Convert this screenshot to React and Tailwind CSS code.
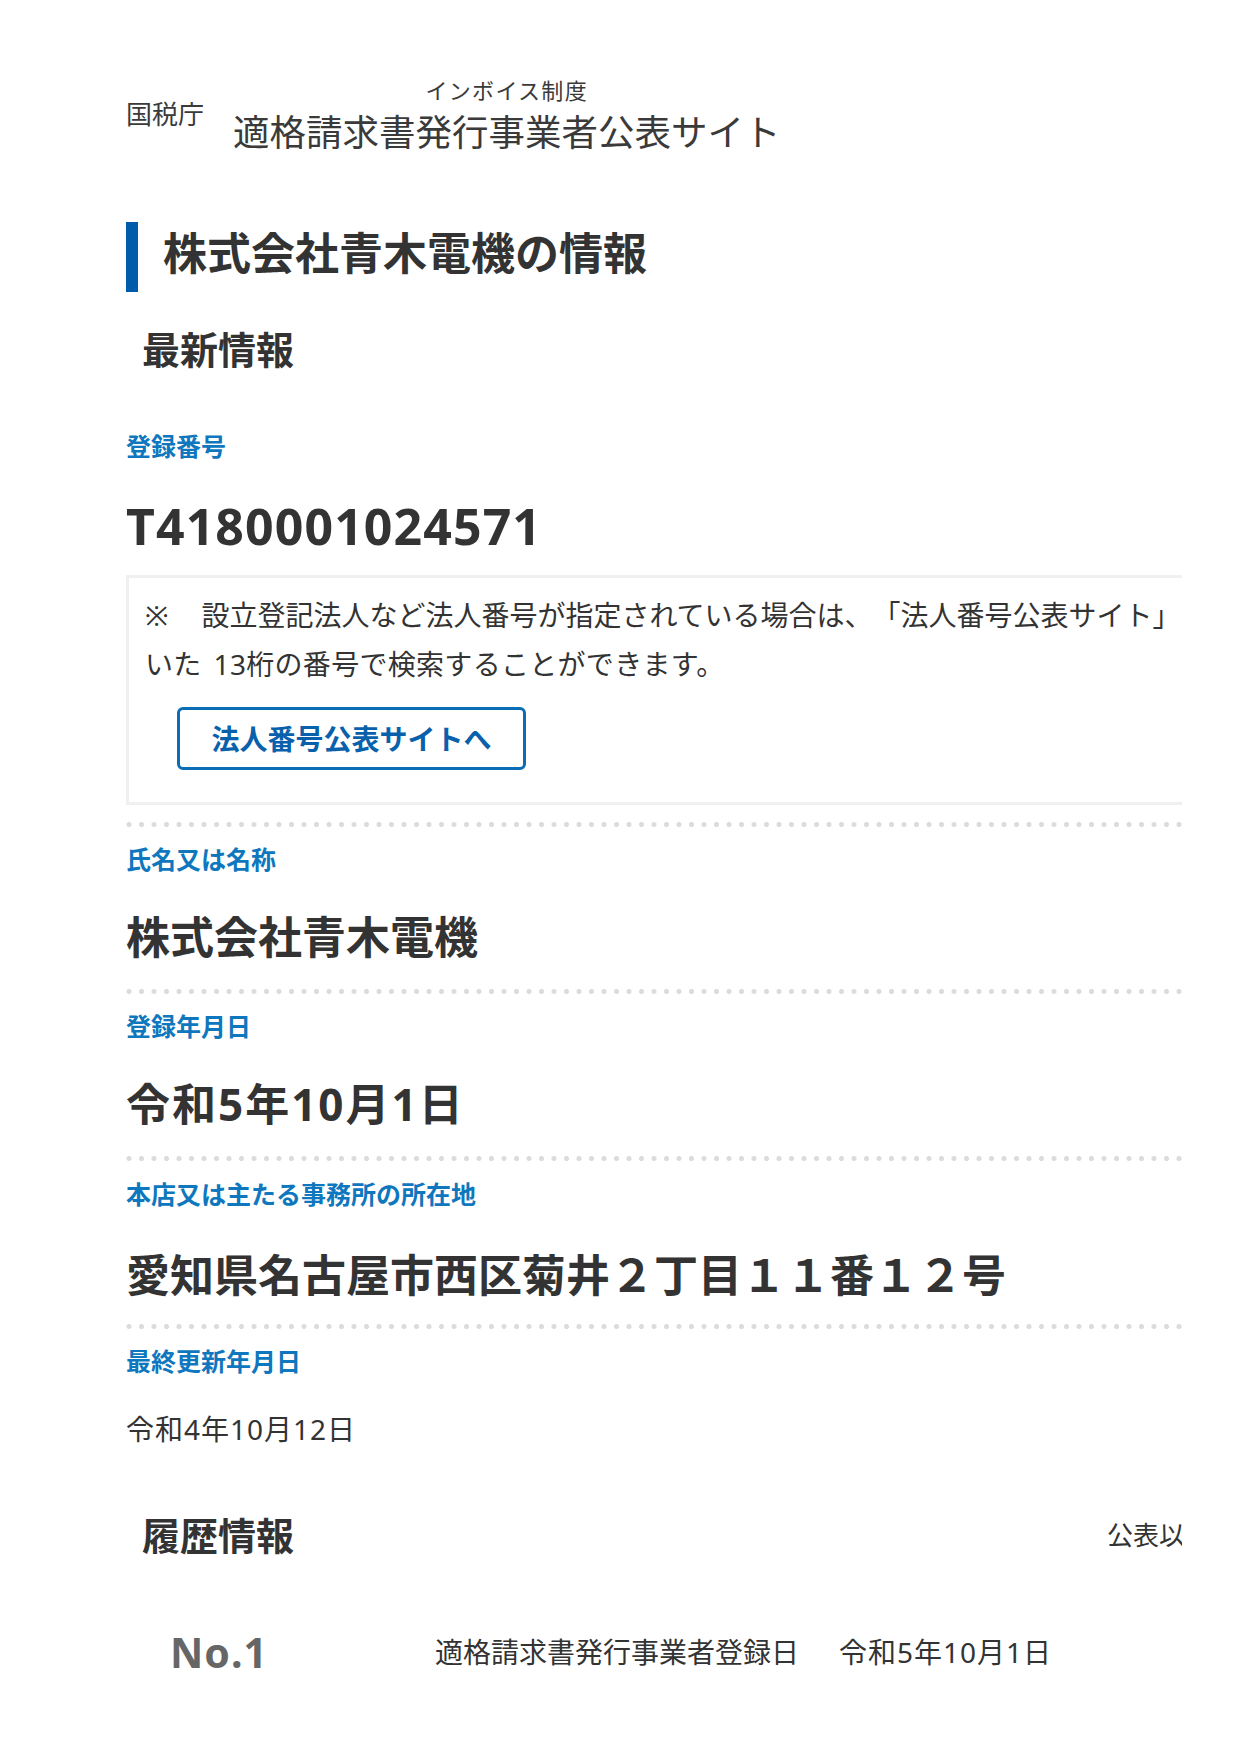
import React from "react";

function Dots({ className = "" }) {
  return (
    <div
      className={
        "h-[5px] w-full bg-[radial-gradient(circle,#dcdcdc_2.2px,transparent_2.8px)] bg-[length:12.5px_5px] bg-repeat-x bg-[position:-3.25px_0] " +
        className
      }
    />
  );
}

function Label({ children, className = "" }) {
  return (
    <div className={"text-[25px] leading-[40px] font-bold text-[#0f77bd] whitespace-nowrap " + className}>
      {children}
    </div>
  );
}

export default function App() {
  return (
    <div className="w-[1242px] min-h-[1754px] bg-white text-[#333] [font-family:'Noto_Sans','Noto_Sans_CJK_JP',sans-serif]">
      <div className="ml-[126px] w-[1056px] overflow-hidden pt-[76px] pb-[70px]">
        {/* header logo */}
        <div className="flex">
          <div className="w-[107px] mt-[22px] text-[26px] leading-[32px] text-[#3a3a3a] whitespace-nowrap">国税庁</div>
          <div className="flex flex-col items-center text-[#3a3a3a]">
            <div className="text-[22px] leading-[28px] tracking-[1.3px] whitespace-nowrap">インボイス制度</div>
            <div className="mt-[6px] text-[36.5px] leading-[44px] whitespace-nowrap">適格請求書発行事業者公表サイト</div>
          </div>
        </div>

        {/* page heading */}
        <div className="mt-[68px] flex items-start">
          <div className="w-[12px] h-[70px] bg-[#005bac] shrink-0" />
          <h1 className="ml-[25px] text-[44px] leading-[62px] font-bold text-[#333] whitespace-nowrap">株式会社青木電機の情報</h1>
        </div>

        <h2 className="mt-[32px] pl-[16px] text-[38px] leading-[50px] font-bold whitespace-nowrap">最新情報</h2>

        <Label className="mt-[52px]">登録番号</Label>
        <div className="mt-[30px] text-[50px] leading-[60px] font-bold tracking-[1.1px]">T4180001024571</div>

        <div className="mt-[19px] w-[1300px] border-[3px] border-[#f0f0f0] pl-[16px] pt-[13px] pb-[32px]">
          <div className="text-[28px] leading-[49px] whitespace-nowrap [text-spacing-trim:space-all]">
            <span className="mr-[5px]">※</span>　設立登記法人など法人番号が指定されている場合は、「法人番号公表サイト」で、法人番号から「T」を除
          </div>
          <div className="text-[28px] leading-[49px] whitespace-nowrap tracking-[0.3px] [text-spacing-trim:space-all]">
            いた<span className="ml-[12px]">13桁の番号で検索することができます。</span>
          </div>
          <a className="mt-[18px] ml-[32px] flex items-center justify-center w-[349px] h-[63px] border-[3px] border-[#0b6db6] rounded-[6px] text-[28px] font-bold text-[#0a61ab] whitespace-nowrap">
            法人番号公表サイトへ
          </a>
        </div>

        <Dots className="mt-[17px]" />
        <Label className="mt-[12px]">氏名又は名称</Label>
        <div className="mt-[28px] text-[44px] leading-[60px] font-bold whitespace-nowrap">株式会社青木電機</div>

        <Dots className="mt-[22px]" />
        <Label className="mt-[12px]">登録年月日</Label>
        <div className="mt-[28px] text-[44px] leading-[60px] font-bold tracking-[2px] whitespace-nowrap">令和5年10月1日</div>

        <Dots className="mt-[22px]" />
        <Label className="mt-[13px]">本店又は主たる事務所の所在地</Label>
        <div className="mt-[31px] text-[44px] leading-[60px] font-bold whitespace-nowrap">愛知県名古屋市西区菊井２丁目１１番１２号</div>

        <Dots className="mt-[19px]" />
        <Label className="mt-[12px]">最終更新年月日</Label>
        <div className="mt-[28px] text-[28px] leading-[40px] tracking-[1px] whitespace-nowrap">令和4年10月12日</div>

        <div className="mt-[61px] flex items-center">
          <h2 className="w-[981px] shrink-0 pl-[16px] text-[38px] leading-[50px] font-bold whitespace-nowrap">履歴情報</h2>
          <div className="text-[26px] leading-[50px] whitespace-nowrap">公表以降の履歴情報</div>
        </div>

        <div className="mt-[62px] flex items-center h-[60px]">
          <div className="w-[309px] shrink-0 pl-[44px] text-[41px] leading-[60px] font-bold tracking-[1px] text-[#666]">No.1</div>
          <div className="text-[28px] leading-[60px] whitespace-nowrap">適格請求書発行事業者登録日</div>
          <div className="ml-[40px] text-[28px] leading-[60px] tracking-[1px] whitespace-nowrap">令和5年10月1日</div>
        </div>
      </div>
    </div>
  );
}
